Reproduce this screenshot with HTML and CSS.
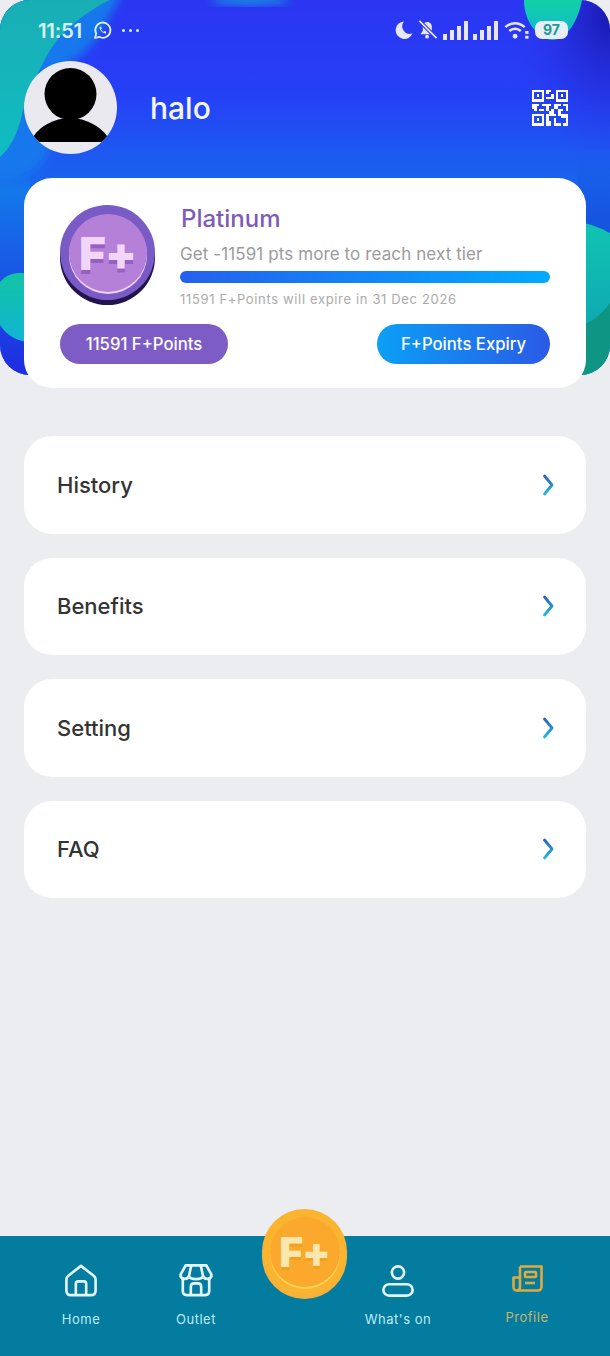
FILE: index.html
```html
<!DOCTYPE html>
<html lang="en">
<head>
    <meta charset="UTF-8">
    <meta name="viewport" content="width=device-width, initial-scale=1.0">
    <title>Profile</title>
    <link rel="stylesheet" href="styles.css">
</head>
<body>
    <div class="app">
        <header class="hero">
            <div class="hero-bg">
                <svg width="610" height="375" viewBox="0 0 610 375">
                    <defs>
                        <linearGradient id="heroFill" x1="0" y1="0" x2="0" y2="1">
                            <stop offset="0" stop-color="#2b35f2"/>
                            <stop offset="0.25" stop-color="#2640f6"/>
                            <stop offset="0.47" stop-color="#1a62ee"/>
                            <stop offset="1" stop-color="#1a62ee"/>
                        </linearGradient>
                        <linearGradient id="leftSide" x1="0" y1="0" x2="0" y2="1">
                            <stop offset="0" stop-color="#1478ea" stop-opacity="0"/>
                            <stop offset="0.1" stop-color="#1478ea"/>
                            <stop offset="1" stop-color="#1f2ce0"/>
                        </linearGradient>
                        <linearGradient id="rightSide" x1="0" y1="0" x2="0" y2="1">
                            <stop offset="0" stop-color="#1452dc" stop-opacity="0"/>
                            <stop offset="1" stop-color="#1452dc"/>
                        </linearGradient>
                        <linearGradient id="tealLeft" x1="0" y1="0" x2="0" y2="1">
                            <stop offset="0" stop-color="#19aeb6"/>
                            <stop offset="1" stop-color="#10bcc0"/>
                        </linearGradient>
                        <linearGradient id="tealLow" x1="0" y1="0" x2="0" y2="1">
                            <stop offset="0" stop-color="#12c4a4"/>
                            <stop offset="1" stop-color="#10b4d4"/>
                        </linearGradient>
                        <linearGradient id="tealRight" x1="0" y1="0" x2="0" y2="1">
                            <stop offset="0" stop-color="#10c4b0"/>
                            <stop offset="1" stop-color="#0e9cb4"/>
                        </linearGradient>
                        <linearGradient id="tealDot" x1="0" y1="0" x2="0" y2="1">
                            <stop offset="0" stop-color="#12d0a8"/>
                            <stop offset="1" stop-color="#10b8d0"/>
                        </linearGradient>
                        <radialGradient id="cornerDark" cx="1" cy="0.1" r="1">
                            <stop offset="0" stop-color="#1a1ab0"/>
                            <stop offset="1" stop-color="#2b35f2" stop-opacity="0"/>
                        </radialGradient>
                        <filter id="soft" x="-30%" y="-30%" width="160%" height="160%">
                            <feGaussianBlur stdDeviation="5"/>
                        </filter>
                    </defs>
                    <rect width="610" height="375" fill="url(#heroFill)"/>
                    <rect x="510" y="0" width="100" height="150" fill="url(#cornerDark)"/>
                    <ellipse cx="250" cy="0" rx="40" ry="4" fill="#14a0e0" filter="url(#soft)"/>
                    <path d="M-10 -10 H125 C100 30 95 50 70 62 C55 80 55 120 50 145 C45 170 25 180 -10 185Z" fill="#1878ec" filter="url(#soft)"/>
                    <path d="M0 0 H110 C96 6 70 24 57 40 C48 52 34 78 23 110 C20 125 14 145 0 157Z" fill="url(#tealLeft)"/>
                    <path d="M0 170 H30 V375 H0Z" fill="url(#leftSide)"/>
                    <path d="M0 282 C8 272 20 272 30 274 V342 C18 342 6 335 0 325Z" fill="url(#tealLow)"/>
                    <path d="M524 0 H582 C578 22 566 40 552 40 C536 38 524 20 524 0Z" fill="url(#tealDot)"/>
                    <path d="M578 150 H610 V240 H578Z" fill="url(#rightSide)"/>
                    <path d="M578 223 C590 223 600 228 610 233 V375 H578Z" fill="url(#tealRight)"/>
                    <path d="M578 326 C590 324 602 314 610 303 V375 H578Z" fill="#0f9583"/>
                </svg>
            </div>

            <div class="status-bar">
                <div class="status-left">
                    <span class="status-time">11:51</span>
                    <svg class="status-wa" width="19" height="19" viewBox="0 0 19 19" fill="none" stroke="#d5f1f3" stroke-width="1.8">
                        <path d="M2 17 L3.2 12.8 A7.6 7.6 0 1 1 6.2 15.8Z" stroke-linejoin="round"/>
                        <path d="M6.6 6 C6.4 9 9.6 12.6 13 12.4 L13.2 10.8 L11.4 10 L10.4 10.9 C9.2 10.3 8.4 9.5 7.9 8.3 L8.8 7.4 L8 5.6Z" fill="#d5f1f3" stroke="none"/>
                    </svg>
                    <span class="status-dots"><i></i><i></i><i></i></span>
                </div>
                <div class="status-right">
                    <svg width="19" height="20" viewBox="0 0 20 20"><path d="M10.5 1 A9.2 9.2 0 1 0 19.5 13.5 A8 8 0 0 1 10.5 1Z" fill="#e6e6f6"/></svg>
                    <svg width="20" height="20" viewBox="0 0 21 20" fill="#e6e6f6">
                        <path d="M10 1.5 C6 1.5 5 4.5 5 7 V11 L2.5 14.5 H16.5 L14.5 11 V6.5 C14.5 4 13 1.5 10 1.5Z"/>
                        <circle cx="9.5" cy="17" r="2"/>
                        <path d="M1.5 0.5 L19.5 18.5" stroke="#2b38f2" stroke-width="4"/>
                        <path d="M1.5 0.5 L19.5 18.5" stroke="#e6e6f6" stroke-width="1.8"/>
                    </svg>
                    <svg width="25" height="19" viewBox="0 0 25 19" fill="#e6e6f6">
                        <rect x="0" y="13" width="4" height="6"/><rect x="7" y="9" width="4" height="10"/><rect x="14" y="5" width="4" height="14"/><rect x="21" y="0" width="4" height="19"/>
                    </svg>
                    <svg width="25" height="19" viewBox="0 0 25 19" fill="#e6e6f6">
                        <rect x="0" y="13" width="4" height="6"/><rect x="7" y="9" width="4" height="10"/><rect x="14" y="5" width="4" height="14"/><rect x="21" y="0" width="4" height="19"/>
                    </svg>
                    <svg class="status-wifi" width="25" height="19" viewBox="0 0 26 19" fill="none" stroke="#e6e6f6" stroke-width="2.6">
                        <path d="M1.5 6 C7.5 0.5 15.5 0.5 21.5 6"/>
                        <path d="M5.5 10 C9 6.8 14 6.8 17.5 10"/>
                        <circle cx="11.5" cy="15.5" r="2.5" fill="#e6e6f6" stroke="none"/>
                        <rect x="22" y="10" width="3.5" height="3" fill="#e6e6f6" stroke="none"/>
                        <rect x="22" y="15" width="3.5" height="3" fill="#e6e6f6" stroke="none"/>
                    </svg>
                    <span class="status-battery">97</span>
                </div>
            </div>

            <div class="profile-row">
                <div class="avatar">
                    <svg width="93" height="93" viewBox="0 0 93 93">
                        <circle cx="46.5" cy="33" r="26"/>
                        <path d="M8 78 C14 66 30 57 46 57 C62 57 78 66 85 78 L85 81 H8Z"/>
                    </svg>
                </div>
                <div class="profile-name">halo</div>
                <svg class="qr-icon" width="36" height="37" viewBox="0 0 15 15" fill="#fff" shape-rendering="crispEdges">
                    <path fill-rule="evenodd" d="M0 0H5V5H0ZM1 1V4H4V1ZM2 2H3V3H2ZM10 0H15V5H10ZM11 1V4H14V1ZM12 2H13V3H12ZM0 10H5V15H0ZM1 11V14H4V11ZM2 12H3V13H2Z"/>
                    <path d="M6 0H8V1H7V2H6ZM8 2H9V4H6V3H8ZM0 6H3V7H2V8H0ZM4 6H8V7H7V9H6V7H4ZM9 6H12V7H11V8H9ZM13 6H15V9H14V7H13ZM1 8H2V9H1ZM3 8H5V9H3ZM8 8H9V10H10V11H7V9H8ZM11 8H13V9H12V10H15V15H13V14H14V12H12V11H11ZM6 10H7V13H8V15H6ZM9 12H10V14H12V15H9Z"/>
                </svg>
            </div>

            <section class="tier-card">
                <div class="tier-top">
                    <div class="coin coin-tier">
                        <div class="coin-face">F+</div>
                    </div>
                    <div class="tier-info">
                        <div class="tier-name">Platinum</div>
                        <div class="tier-next">Get -11591 pts more to reach next tier</div>
                        <div class="tier-bar"></div>
                        <div class="tier-expire">11591 F+Points will expire in 31 Dec 2026</div>
                    </div>
                </div>
                <div class="tier-actions">
                    <button class="pill pill-points">11591 F+Points</button>
                    <button class="pill pill-expiry">F+Points Expiry</button>
                </div>
            </section>
        </header>

        <main class="menu">
            <a class="menu-row" href="#">
                <span>History</span>
                <svg width="12" height="22" viewBox="0 0 12 22" fill="none" stroke="url(#chevron)" stroke-width="2.8" stroke-linecap="round" stroke-linejoin="round">
                    <defs>
                        <linearGradient id="chevron" gradientUnits="userSpaceOnUse" x1="0" y1="1" x2="0" y2="21">
                            <stop offset="0" stop-color="#2f5fb8"/>
                            <stop offset="1" stop-color="#1fc0d8"/>
                        </linearGradient>
                    </defs>
                    <path d="M2.5 2 L10 11 L2.5 20"/>
                </svg>
            </a>
            <a class="menu-row" href="#">
                <span>Benefits</span>
                <svg width="12" height="22" viewBox="0 0 12 22" fill="none" stroke="url(#chevron)" stroke-width="2.8" stroke-linecap="round" stroke-linejoin="round"><path d="M2.5 2 L10 11 L2.5 20"/></svg>
            </a>
            <a class="menu-row" href="#">
                <span>Setting</span>
                <svg width="12" height="22" viewBox="0 0 12 22" fill="none" stroke="url(#chevron)" stroke-width="2.8" stroke-linecap="round" stroke-linejoin="round"><path d="M2.5 2 L10 11 L2.5 20"/></svg>
            </a>
            <a class="menu-row" href="#">
                <span>FAQ</span>
                <svg width="12" height="22" viewBox="0 0 12 22" fill="none" stroke="url(#chevron)" stroke-width="2.8" stroke-linecap="round" stroke-linejoin="round"><path d="M2.5 2 L10 11 L2.5 20"/></svg>
            </a>
        </main>

        <nav class="bottom-nav">
            <a class="nav-item" href="#">
                <svg width="32" height="33" viewBox="0 0 34 35" fill="none" stroke="#e4f6fb" stroke-width="2.8" stroke-linejoin="round">
                    <path d="M17 2 L3.5 12.5 C2.2 13.6 1.5 15 1.5 16.5 V28 C1.5 31 3.5 33 6.5 33 H27.5 C30.5 33 32.5 31 32.5 28 V16.5 C32.5 15 31.8 13.6 30.5 12.5Z"/>
                    <path d="M11.5 33 V21 C11.5 19.5 12.5 18.5 14 18.5 H20 C21.5 18.5 22.5 19.5 22.5 21 V33"/>
                </svg>
                <span>Home</span>
            </a>
            <a class="nav-item" href="#">
                <svg width="36" height="33" viewBox="0 0 36 35" fill="none" stroke="#e4f6fb" stroke-width="2.8" stroke-linejoin="round">
                    <path d="M7 1.5 H29 L34.5 11.5 C34.5 17 27 17 25.5 13 C24 17 12 17 10.5 13 C9 17 1.5 17 1.5 11.5Z"/>
                    <path d="M10.5 13 L13 1.5 M25.5 13 L23 1.5"/>
                    <path d="M4 16 V29 C4 31.5 5.5 33 8 33 H28 C30.5 33 32 31.5 32 29 V16"/>
                    <path d="M12.5 33 V24 C12.5 22 14 20.5 16 20.5 H20 C22 20.5 23.5 22 23.5 24 V33"/>
                </svg>
                <span>Outlet</span>
            </a>
            <div class="nav-spacer"></div>
            <a class="nav-item" href="#">
                <svg width="34" height="33" viewBox="0 0 34 35" fill="none" stroke="#e4f6fb" stroke-width="2.8">
                    <circle cx="17" cy="9" r="6.5"/>
                    <rect x="1.5" y="21.5" width="31" height="12" rx="6"/>
                </svg>
                <span>What's on</span>
            </a>
            <a class="nav-item nav-item-active" href="#">
                <svg width="31" height="27" viewBox="0 0 31 27" fill="none" stroke="#e0aa3e" stroke-width="2.6" stroke-linejoin="round">
                    <path d="M8 1.5 H29.5 V22 C29.5 24 28 25.5 26 25.5 H5"/>
                    <path d="M8 1.5 V21.5 C8 24 6.5 25.5 4.5 25.5 C2.5 25.5 1.5 24 1.5 22 V12.5 H8"/>
                    <rect x="13" y="7" width="11" height="5" rx="1"/>
                    <path d="M13 18 H23"/>
                </svg>
                <span>Profile</span>
            </a>
        </nav>

        <div class="coin coin-gold">
            <div class="coin-face">F+</div>
        </div>
    </div>
</body>
</html>
```

FILE: styles.css
```css
* {
    margin: 0;
    padding: 0;
    box-sizing: border-box;
    font-family: 'Inter', 'Liberation Sans', sans-serif;
}

body {
    background: #ebedf1;
    color: #333;
}

.app {
    position: relative;
    display: flex;
    flex-direction: column;
    width: 610px;
    height: 1356px;
    overflow: hidden;
}

/* header */
.hero {
    position: relative;
    height: 375px;
}

.hero-bg {
    position: absolute;
    inset: 0;
    border-radius: 30px;
    overflow: hidden;
}

.hero-bg svg {
    display: block;
}

.status-bar {
    position: relative;
    display: flex;
    justify-content: space-between;
    align-items: center;
    height: 61px;
    padding: 0 42px 1px 38px;
}

.status-left,
.status-right {
    display: flex;
    align-items: center;
}

.status-time {
    font-size: 20.5px;
    font-weight: 600;
    color: #d5f1f3;
    letter-spacing: -0.3px;
}

.status-wa {
    margin-left: 11px;
}

.status-dots {
    display: flex;
    gap: 4px;
    margin-left: 10px;
}

.status-dots i {
    width: 3px;
    height: 3px;
    border-radius: 50%;
    background: #d5f1f3;
}

.status-right {
    gap: 5px;
}

.status-wifi {
    margin-left: 1px;
}

.status-battery {
    width: 33px;
    height: 18px;
    margin-left: 1px;
    border-radius: 7px;
    background: #e8eef6;
    color: #1f9c92;
    font-size: 14px;
    font-weight: 700;
    line-height: 18px;
    text-align: center;
}

.profile-row {
    position: relative;
    display: flex;
    align-items: center;
    height: 93px;
    padding: 0 42px 0 24px;
}

.avatar {
    width: 93px;
    height: 93px;
    border-radius: 50%;
    background: #e9e9ef;
    overflow: hidden;
}

.avatar svg {
    display: block;
}

.profile-name {
    margin-left: 33px;
    font-size: 30px;
    font-weight: 500;
    color: #f4f6ff;
}

.qr-icon {
    margin-left: auto;
}

/* tier card */
.tier-card {
    position: relative;
    display: flex;
    flex-direction: column;
    justify-content: space-between;
    height: 210px;
    margin: 24px 24px 0;
    padding: 27px 36px 24px;
    border-radius: 28px;
    background: #fff;
}

.tier-top {
    display: flex;
}

.tier-info {
    flex: 1;
    margin: -1px 0 0 25px;
}

.tier-name {
    padding-left: 1px;
    font-size: 24px;
    font-weight: 500;
    line-height: 29px;
    color: #7d5cb8;
}

.tier-next {
    margin-top: 11px;
    font-size: 17px;
    line-height: 20px;
    letter-spacing: 0.1px;
    color: #9b9b9b;
}

.tier-bar {
    height: 12px;
    margin-top: 7px;
    border-radius: 6px;
    background: linear-gradient(90deg, #2460ee, #02aaff);
}

.tier-expire {
    margin-top: 8px;
    font-size: 13px;
    line-height: 16px;
    letter-spacing: 0.65px;
    color: #ababab;
}

.tier-actions {
    display: flex;
    justify-content: space-between;
}

.pill {
    height: 40px;
    border: none;
    border-radius: 20px;
    color: #fff;
    font-size: 16.7px;
    font-weight: 500;
}

.pill-points {
    width: 168px;
    background: #7e5cc6;
}

.pill-expiry {
    width: 173px;
    background: linear-gradient(90deg, #0aa0f5, #2b5ae6);
}

/* coins */
.coin {
    display: flex;
    flex-shrink: 0;
    justify-content: center;
    align-items: center;
    border-radius: 50%;
}

.coin-face {
    display: flex;
    justify-content: center;
    align-items: center;
    border-radius: 50%;
    font-weight: 900;
    letter-spacing: -1px;
}

.coin-tier {
    width: 95px;
    height: 95px;
    background: #7a5ac4;
    box-shadow: 0 5px 0 #21144f;
}

.coin-tier .coin-face {
    width: 78px;
    height: 78px;
    background: #b580d8;
    box-shadow: 0 2px 0 #f0d2f8;
    color: #f2d6fa;
    font-size: 46px;
    text-shadow: 0 4px 0 #9560c4;
}

.coin-gold {
    position: absolute;
    left: 262px;
    top: 1209px;
    width: 85px;
    height: 85px;
    background: #fbb430;
    box-shadow: 0 5px 0 #f5b23a;
}

.coin-gold .coin-face {
    width: 70px;
    height: 70px;
    background: #fba92c;
    box-shadow: 0 2px 0 #fcd45c;
    color: #fde6ae;
    font-size: 41px;
    text-shadow: 0 3px 0 #f3a022;
}

/* menu */
.menu {
    display: flex;
    flex-direction: column;
    gap: 24px;
    margin-top: 61px;
    padding: 0 24px;
}

.menu-row {
    display: flex;
    justify-content: space-between;
    align-items: center;
    height: 97.5px;
    padding: 0 32px 0 33px;
    border-radius: 28px;
    background: #fff;
    color: #333;
    font-size: 22px;
    font-weight: 500;
    text-decoration: none;
}

/* bottom nav */
.bottom-nav {
    display: grid;
    grid-template-columns: 114px 116px 86px 116px 142px;
    height: 120px;
    margin-top: auto;
    padding: 28px 0 0 24px;
    background: #047ca0;
}

.nav-item {
    display: flex;
    flex-direction: column;
    align-items: center;
    color: #bfeaf5;
    font-size: 13px;
    line-height: 17px;
    letter-spacing: 0.5px;
    text-decoration: none;
}

.nav-item span {
    margin-top: 14px;
}

.nav-item-active {
    color: #c9b46a;
}

.nav-item-active svg {
    margin-top: 1px;
}

.nav-item-active span {
    margin-top: 17px;
}
```
